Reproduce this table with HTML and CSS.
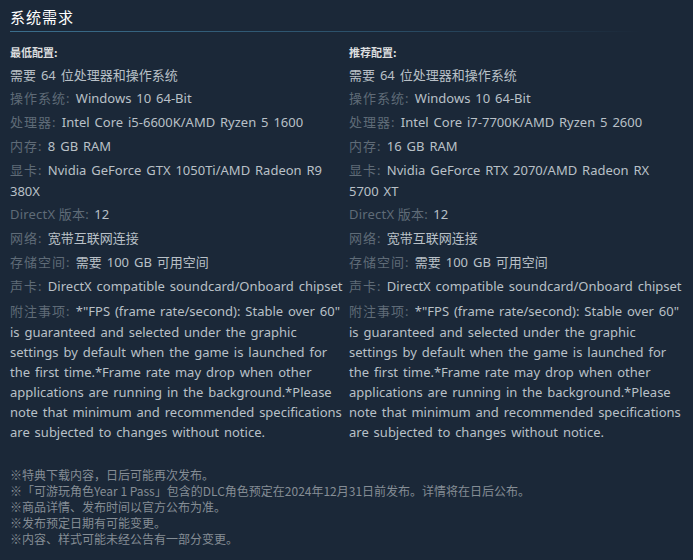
FILE: index.html
```html
<!DOCTYPE html>
<html lang="zh-CN">
<head>
<meta charset="utf-8">
<title>系统需求</title>
<link rel="stylesheet" href="styles.css">
</head>
<body>
<section class="sysreq">
  <h2 class="title">系统需求</h2>
  <div class="cols">
    <div class="col">
      <div class="col-head">最低配置:</div>
      <ul class="reqs">
        <li>需要 64 位处理器和操作系统</li>
        <li><span class="lbl">操作系统:</span> Windows 10 64-Bit</li>
        <li><span class="lbl">处理器:</span> Intel Core i5-6600K/AMD Ryzen 5 1600</li>
        <li><span class="lbl">内存:</span> 8 GB RAM</li>
        <li><span class="lbl">显卡:</span> Nvidia GeForce GTX 1050Ti/AMD Radeon R9 380X</li>
        <li><span class="lbl lbl-dx">DirectX 版本:</span> 12</li>
        <li><span class="lbl">网络:</span> 宽带互联网连接</li>
        <li><span class="lbl">存储空间:</span> 需要 100 GB 可用空间</li>
        <li><span class="lbl">声卡:</span> DirectX compatible soundcard/Onboard chipset</li>
        <li class="long"><span class="lbl">附注事项:</span> *"FPS (frame rate/second): Stable over 60" is guaranteed and selected under the graphic settings by default when the game is launched for the first time.*Frame rate may drop when other applications are running in the background.*Please note that minimum and recommended specifications are subjected to changes without notice.</li>
      </ul>
    </div>
    <div class="col">
      <div class="col-head">推荐配置:</div>
      <ul class="reqs">
        <li>需要 64 位处理器和操作系统</li>
        <li><span class="lbl">操作系统:</span> Windows 10 64-Bit</li>
        <li><span class="lbl">处理器:</span> Intel Core i7-7700K/AMD Ryzen 5 2600</li>
        <li><span class="lbl">内存:</span> 16 GB RAM</li>
        <li><span class="lbl">显卡:</span> Nvidia GeForce RTX 2070/AMD Radeon RX 5700 XT</li>
        <li><span class="lbl lbl-dx">DirectX 版本:</span> 12</li>
        <li><span class="lbl">网络:</span> 宽带互联网连接</li>
        <li><span class="lbl">存储空间:</span> 需要 100 GB 可用空间</li>
        <li><span class="lbl">声卡:</span> DirectX compatible soundcard/Onboard chipset</li>
        <li class="long"><span class="lbl">附注事项:</span> *"FPS (frame rate/second): Stable over 60" is guaranteed and selected under the graphic settings by default when the game is launched for the first time.*Frame rate may drop when other applications are running in the background.*Please note that minimum and recommended specifications are subjected to changes without notice.</li>
      </ul>
    </div>
  </div>
  <div class="notes">
    <p>※特典下载内容，日后可能再次发布。</p>
    <p>※「可游玩角色Year 1 Pass」包含的DLC角色预定在2024年12月31日前发布。详情将在日后公布。</p>
    <p>※商品详情、发布时间以官方公布为准。</p>
    <p>※发布预定日期有可能变更。</p>
    <p>※内容、样式可能未经公告有一部分变更。</p>
  </div>
</section>
</body>
</html>
```

FILE: styles.css
```css
html, body {
  margin: 0;
  padding: 0;
  background: #1b2838;
}
body {
  font-family: "Noto Sans", "Noto Sans CJK SC", sans-serif;
  color: #b9c0c7;
}
.sysreq {
  padding: 0 10px;
}
.title {
  margin: 0;
  width: 630px;
  padding-top: 7px;
  padding-bottom: 4px;
  font-family: "Noto Sans CJK SC", sans-serif;
  font-size: 15px;
  line-height: 20px;
  font-weight: normal;
  letter-spacing: 1px;
  color: #ffffff;
  border-bottom: 1px solid transparent;
  border-image: linear-gradient(to right, #3b6e8c 0%, #2a4d66 60%, rgba(59,110,140,0) 100%) 1;
}
.cols {
  display: grid;
  grid-template-columns: 334px 334px;
  column-gap: 5px;
  margin-top: 12px;
}
.col-head {
  font-family: "Noto Sans CJK SC", sans-serif;
  font-size: 11px;
  line-height: 16px;
  font-weight: bold;
  color: #dcdedf;
  margin-bottom: 5px;
}
.reqs {
  list-style: none;
  margin: 0;
  padding: 0;
  font-size: 13px;
  line-height: 20px;
  word-spacing: 1.5px;
}
.reqs li {
  margin-bottom: 2px;
}
.reqs li.long {
  padding-top: 1px;
}
.lbl {
  color: #5f6b77;
  line-height: 22px;
  letter-spacing: 1px;
  word-spacing: 0;
  margin-right: 0.5px;
}
.lbl-dx {
  letter-spacing: 0.2px;
}
.notes {
  margin-top: 23px;
  font-family: "Noto Sans CJK SC", sans-serif;
  font-size: 12px;
  line-height: 16px;
  color: #858d95;
}
.notes p {
  margin: 0;
}
```
